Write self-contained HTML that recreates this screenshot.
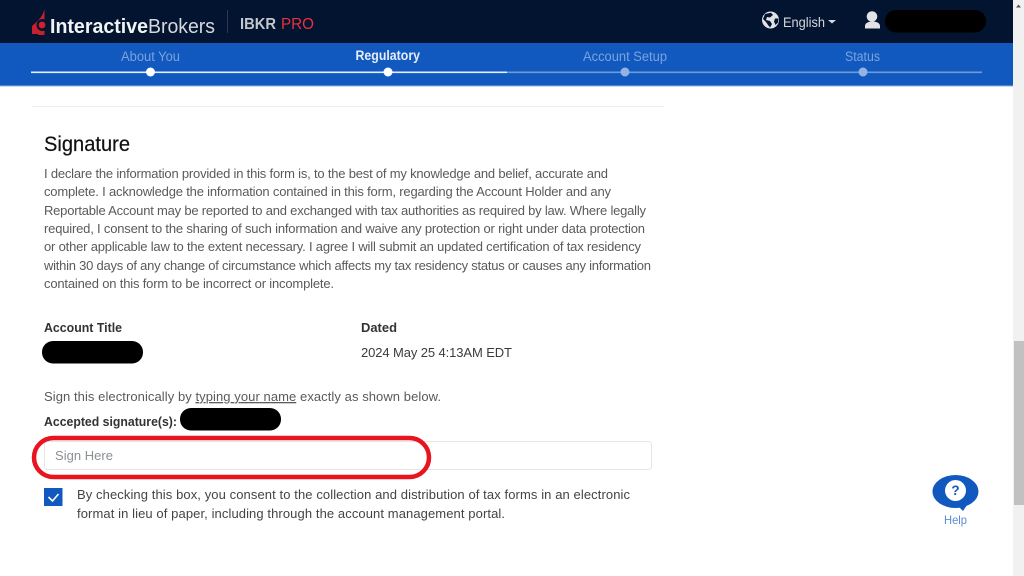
<!DOCTYPE html>
<html lang="en">
<head>
<meta charset="utf-8">
<title>Signature</title>
<style>
html,body{margin:0;padding:0;width:1024px;height:576px;overflow:hidden;background:#fff}
svg{display:block}
text{font-family:"Liberation Sans",sans-serif}
</style>
</head>
<body>
<svg width="1024" height="576" viewBox="0 0 1024 576" xmlns="http://www.w3.org/2000/svg">
<rect width="1024" height="576" fill="#fff"/>
<!-- Header -->
<rect x="0" y="0" width="1013" height="43" fill="#02142f"/>
<rect x="0" y="43" width="1013" height="43" fill="#1259bf"/>
<rect x="0" y="85.500" width="1013" height="1" fill="#8fb2e2"/>
<!-- Logo -->
<path d="M44.500 9 C43 15 40 19 36 22.500 L32 26 L32 34 L44.500 34 L44.500 9 Z" fill="#c8202d"/>
<path d="M44.500 9 L46 9 L46 35 L44.500 35 Z" fill="#02142f"/>
<circle cx="42.500" cy="25" r="6" fill="#02142f"/>
<path d="M38.500 30 L45 35 L38 35 Z" fill="#c8202d"/>
<circle cx="42" cy="25" r="3.400" fill="#d3202e"/>
<text x="50" y="33" font-size="20" font-weight="700" fill="#f1f3f5" textLength="98" lengthAdjust="spacingAndGlyphs">Interactive</text>
<text x="148" y="33" font-size="20" fill="#d5d8dc" textLength="67" lengthAdjust="spacingAndGlyphs">Brokers</text>
<rect x="227" y="10" width="1" height="23" fill="#2b3a52"/>
<text x="240" y="29" font-size="16" font-weight="700" fill="#c3c7cd" textLength="36" lengthAdjust="spacingAndGlyphs">IBKR</text>
<text x="281" y="29" font-size="16" fill="#e8323c" textLength="33" lengthAdjust="spacingAndGlyphs">PRO</text>
<!-- Globe -->
<circle cx="770.500" cy="20" r="8.500" fill="#e0e2e5"/>
<path d="M765 14 L771 12.800 L773 15 L770 17.500 L767 17 L766 20 L770 21 L772 24 L770 27.500 L768 25 L766 22 L763 19 Z" fill="#02142f"/>
<path d="M775 18.500 L778.500 18.500 L778 22.500 L775.500 25 L774 21.500 Z" fill="#02142f"/>
<text x="783" y="27" font-size="14" fill="#d5d8dc" textLength="42" lengthAdjust="spacingAndGlyphs">English</text>
<path d="M828 20 L836 20 L832 23.500 Z" fill="#d5d8dc"/>
<!-- User -->
<circle cx="872" cy="16.500" r="5.300" fill="#e0e2e5"/>
<path d="M865 28.500 L865 26 C865 23 868.500 21.500 872.500 21.500 C876.500 21.500 880 23 880 26 L880 28.500 Z" fill="#e0e2e5"/>
<rect x="885" y="10" width="101" height="22.500" rx="11" fill="#000"/>
<!-- Stepper -->
<rect x="31" y="71.500" width="476" height="1.600" fill="#e8eef8"/>
<rect x="507" y="71.500" width="475" height="1.600" fill="#6f9ad8"/>
<circle cx="150.500" cy="72" r="4.500" fill="#fff"/>
<circle cx="388" cy="72" r="4.500" fill="#fff"/>
<circle cx="625" cy="72" r="4.500" fill="#93b3e2"/>
<circle cx="863" cy="72" r="4.500" fill="#93b3e2"/>
<text x="121" y="61" font-size="13.500" fill="#7ba2dc" textLength="59" lengthAdjust="spacingAndGlyphs">About You</text>
<text x="355.500" y="60" font-size="13.500" font-weight="700" fill="#e6edf8" textLength="64.500" lengthAdjust="spacingAndGlyphs">Regulatory</text>
<text x="583" y="61" font-size="13.500" fill="#7ba2dc" textLength="84" lengthAdjust="spacingAndGlyphs">Account Setup</text>
<text x="845" y="61" font-size="13.500" fill="#7ba2dc" textLength="35" lengthAdjust="spacingAndGlyphs">Status</text>
<!-- Divider -->
<rect x="32" y="106" width="632" height="1" fill="#ececec"/>
<!-- Signature -->
<text x="44" y="151" font-size="21" fill="#111" stroke="#111" stroke-width="0.200" textLength="86" lengthAdjust="spacingAndGlyphs">Signature</text>
<g font-size="13" fill="#5a5a5a">
<text x="44" y="178" textLength="564">I declare the information provided in this form is, to the best of my knowledge and belief, accurate and</text>
<text x="44" y="196" textLength="567">complete. I acknowledge the information contained in this form, regarding the Account Holder and any</text>
<text x="44" y="215" textLength="602">Reportable Account may be reported to and exchanged with tax authorities as required by law. Where legally</text>
<text x="44" y="233" textLength="601">required, I consent to the sharing of such information and waive any protection or right under data protection</text>
<text x="44" y="251" textLength="597">or other applicable law to the extent necessary. I agree I will submit an updated certification of tax residency</text>
<text x="44" y="270" textLength="607">within 30 days of any change of circumstance which affects my tax residency status or causes any information</text>
<text x="44" y="288" textLength="290">contained on this form to be incorrect or incomplete.</text>
</g>
<text x="44" y="332" font-size="13" font-weight="700" fill="#333" textLength="78" lengthAdjust="spacingAndGlyphs">Account Title</text>
<text x="361" y="332" font-size="13" font-weight="700" fill="#333" textLength="36" lengthAdjust="spacingAndGlyphs">Dated</text>
<rect x="42" y="341" width="101" height="22.500" rx="11" fill="#000"/>
<text x="361" y="357" font-size="13" fill="#3c3c3c" textLength="151">2024 May 25 4:13AM EDT</text>
<text x="44" y="401" font-size="13" fill="#5a5a5a" textLength="397">Sign this electronically by <tspan text-decoration="underline">typing your name</tspan> exactly as shown below.</text>
<text x="44" y="426" font-size="13" font-weight="700" fill="#333" textLength="133" lengthAdjust="spacingAndGlyphs">Accepted signature(s):</text>
<rect x="180" y="408" width="101" height="22.500" rx="11" fill="#000"/>
<!-- Input -->
<rect x="44.500" y="441.500" width="607" height="28" rx="3" fill="#fff" stroke="#e6e6e6"/>
<text x="55" y="460" font-size="13" fill="#8a8f94" textLength="58">Sign Here</text>
<rect x="34" y="438" width="395" height="39" rx="19.500" fill="none" stroke="#e8141f" stroke-width="4.500"/>
<!-- Checkbox -->
<rect x="44" y="488" width="18.500" height="18" fill="#1259bf"/>
<path d="M48.500 497 L52.500 501 L58.500 494" fill="none" stroke="#fff" stroke-width="1.600"/>
<text x="77" y="499" font-size="13" fill="#444" textLength="553">By checking this box, you consent to the collection and distribution of tax forms in an electronic</text>
<text x="77" y="518" font-size="13" fill="#444" textLength="428">format in lieu of paper, including through the account management portal.</text>
<!-- Help -->
<ellipse cx="955.500" cy="491.500" rx="23" ry="16.500" fill="#1259bf"/>
<path d="M957 505 L967 505 L963 511 Z" fill="#1259bf"/>
<circle cx="955.500" cy="490.500" r="10.500" fill="#fff"/>
<text x="955.500" y="495" font-size="13.500" font-weight="700" fill="#1259bf" text-anchor="middle">?</text>
<text x="944" y="524" font-size="12" fill="#5b8bd3" textLength="23" lengthAdjust="spacingAndGlyphs">Help</text>
<!-- Scrollbar -->
<rect x="1013" y="0" width="11" height="576" fill="#f1f1f1"/>
<rect x="1014" y="341" width="10" height="164" fill="#c1c1c1"/>
<path d="M1016 7.500 L1021 7.500 L1018.500 4.500 Z" fill="#505050"/>
</svg>
</body>
</html>
